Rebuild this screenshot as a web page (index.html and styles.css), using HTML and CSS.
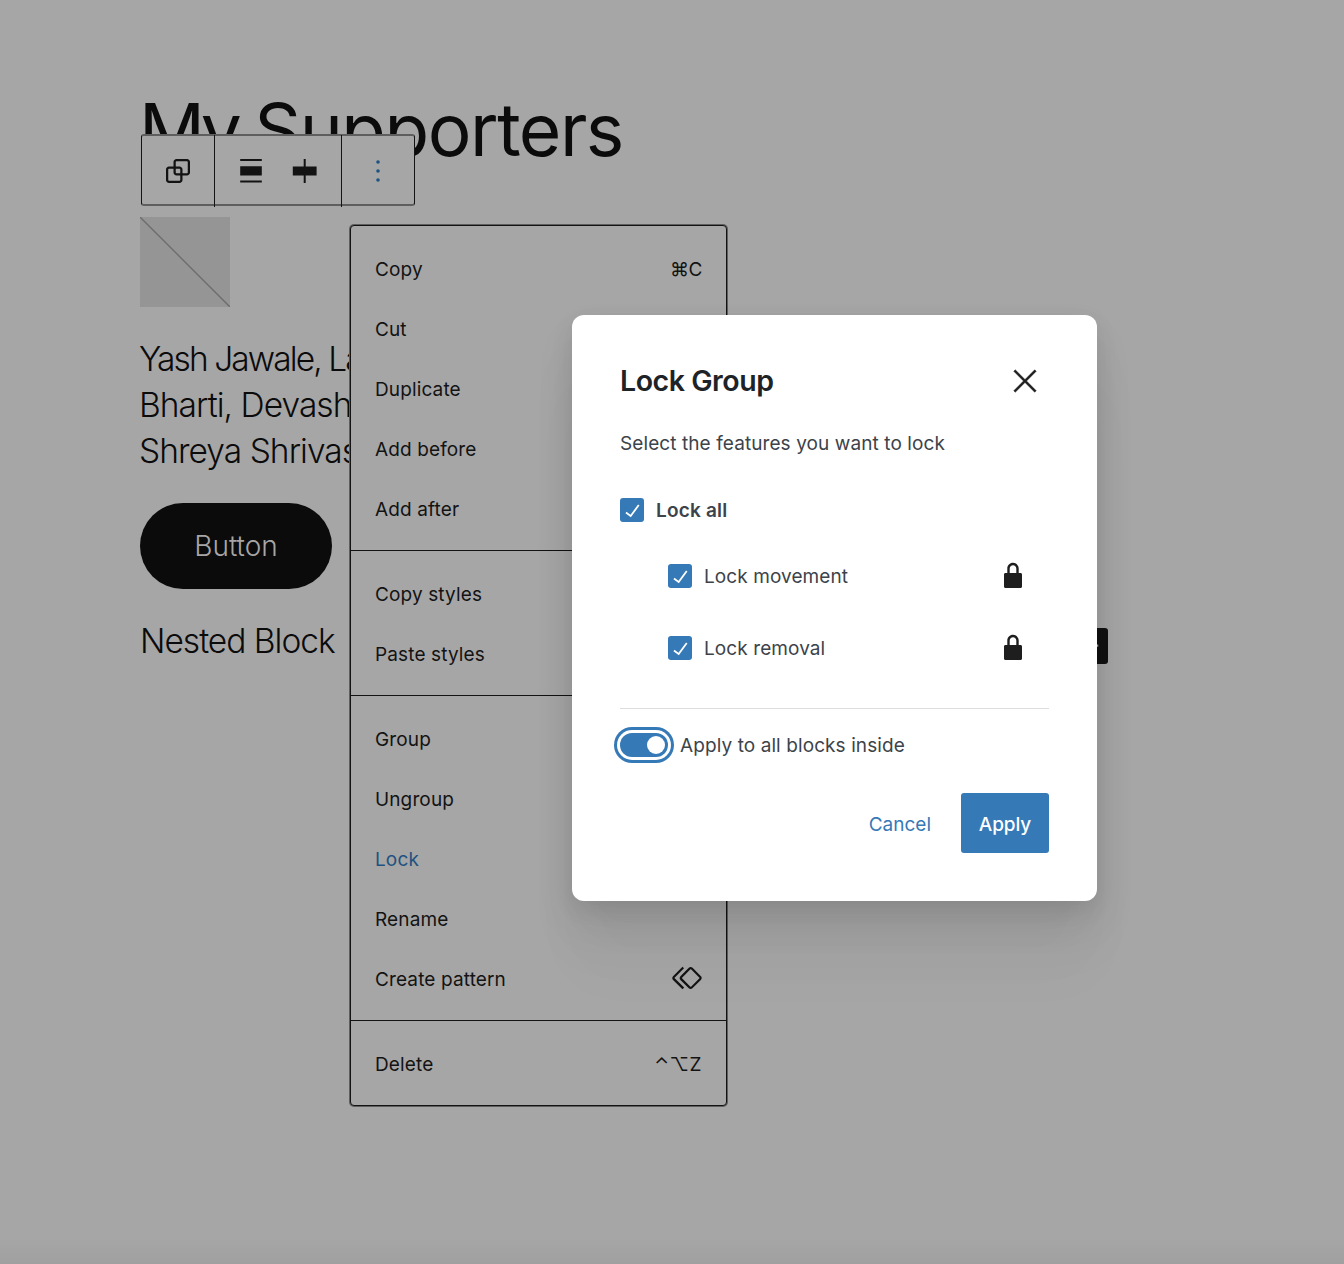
FILE: index.html
```html
<!DOCTYPE html>
<html lang="en">
<head>
<meta charset="utf-8">
<title>My Supporters</title>
<link rel="stylesheet" href="styles.css">
</head>
<body>
<main class="canvas">
  <h1 class="page-title"><span class="narrow">My</span> Supporters</h1>
  <svg class="placeholder" viewBox="0 0 90 90"><path d="M0 0L90 90"/></svg>
  <p class="names"><span class="tight">Yash Jawale, La</span><br>Bharti, Devash<br>Shreya Shrivas</p>
  <a class="cta">Button</a>
  <div class="nested">
    <p>Nested Block</p>
    <button class="appender" aria-label="Add block"><svg viewBox="0 0 24 24"><path d="M11 12.5V17.5H12.5V12.5H17.5V11H12.5V6H11V11H6V12.5H11Z"/></svg></button>
  </div>
</main>

<div class="toolbar">
  <div class="tool-group single">
    <svg viewBox="0 0 24 24"><path d="M18 4h-7c-1.1 0-2 .9-2 2v3H6c-1.1 0-2 .9-2 2v7c0 1.1.9 2 2 2h7c1.1 0 2-.9 2-2v-3h3c1.1 0 2-.9 2-2V6c0-1.1-.9-2-2-2zm-4.5 14c0 .3-.2.5-.5.5H6c-.3 0-.5-.2-.5-.5v-7c0-.3.2-.5.5-.5h3V13c0 1.1.9 2 2 2h2.5v3zm0-4.5H11c-.3 0-.5-.2-.5-.5v-2.5H13c.3 0 .5.2.5.5v2.5zm5-.5c0 .3-.2.5-.5.5h-3V11c0-1.1-.9-2-2-2h-2.5V6c0-.3.2-.5.5-.5h7c.3 0 .5.2.5.5v7z"/></svg>
  </div>
  <div class="tool-group pair">
    <svg viewBox="0 0 36 36"><path d="M7.2 6h21.6v2H7.2zM7.2 13.2h21.6v9.2H7.2zM7.2 27.6h21.6v2H7.2z"/></svg>
    <svg viewBox="0 0 36 36"><path d="M5.8 13.4h10.9V6h2v7.4h10.9v9.2H18.7v7.4h-2v-7.4H5.8z"/></svg>
  </div>
  <div class="tool-group last">
    <svg class="more" viewBox="0 0 24 24"><circle cx="12" cy="6" r="1.2"/><circle cx="12" cy="12" r="1.2"/><circle cx="12" cy="18" r="1.2"/></svg>
  </div>
</div>

<div class="menu">
  <div class="menu-group">
    <div class="item"><span>Copy</span><span class="keys">⌘C</span></div>
    <div class="item"><span>Cut</span></div>
    <div class="item"><span>Duplicate</span></div>
    <div class="item"><span>Add before</span></div>
    <div class="item"><span>Add after</span></div>
  </div>
  <div class="menu-group">
    <div class="item"><span>Copy styles</span></div>
    <div class="item"><span>Paste styles</span></div>
  </div>
  <div class="menu-group">
    <div class="item"><span>Group</span></div>
    <div class="item"><span>Ungroup</span></div>
    <div class="item active"><span>Lock</span></div>
    <div class="item"><span>Rename</span></div>
    <div class="item"><span>Create pattern</span>
      <svg viewBox="0 0 24 24"><path d="M21.3 10.8l-5.6-5.6c-.7-.7-1.8-.7-2.5 0l-5.6 5.6c-.7.7-.7 1.8 0 2.5l5.6 5.6c.3.3.8.5 1.2.5s.9-.2 1.2-.5l5.6-5.6c.8-.7.8-1.9.1-2.5zm-1 1.4l-5.6 5.6c-.1.1-.3.1-.4 0l-5.6-5.6c-.1-.1-.1-.3 0-.4l5.6-5.6s.1-.1.2-.1.1 0 .2.1l5.6 5.6c.1.1.1.3 0 .4zm-16.6-.4L10 5.5l-1-1-6.3 6.3c-.7.7-.7 1.8 0 2.5L9 19.5l1.1-1.1-6.3-6.3c-.2 0-.2-.2-.1-.3z"/></svg>
    </div>
  </div>
  <div class="menu-group">
    <div class="item"><span>Delete</span><span class="keys wide">⌃⌥Z</span></div>
  </div>
</div>

<section class="modal" role="dialog">
  <header class="modal-head">
    <h2>Lock Group</h2>
    <svg viewBox="0 0 24 24"><path d="m13.06 12 6.47-6.47-1.06-1.06L12 10.94 5.53 4.47 4.47 5.53 10.94 12l-6.47 6.47 1.06 1.06L12 13.06l6.47 6.47 1.06-1.06L13.06 12Z"/></svg>
  </header>
  <p class="desc">Select the features you want to lock</p>
  <div class="check-row all">
    <i class="box"><svg viewBox="0 0 24 24"><path d="M16.7 7.1l-6.3 8.5-3.3-2.5-.9 1.2 4.5 3.4L17.9 8z"/></svg></i>
    <span>Lock all</span>
  </div>
  <div class="check-row sub">
    <i class="box"><svg viewBox="0 0 24 24"><path d="M16.7 7.1l-6.3 8.5-3.3-2.5-.9 1.2 4.5 3.4L17.9 8z"/></svg></i>
    <span>Lock movement</span>
    <svg class="lock" viewBox="0 0 24 24"><path d="M17 10h-1.2V7c0-2.1-1.7-3.8-3.8-3.8-2.1 0-3.8 1.7-3.8 3.8v3H7c-.6 0-1 .4-1 1v8c0 .6.4 1 1 1h10c.6 0 1-.4 1-1v-8c0-.6-.4-1-1-1zm-2.8 0H9.8V7c0-1.2 1-2.2 2.2-2.2s2.2 1 2.2 2.2v3z"/></svg>
  </div>
  <div class="check-row sub">
    <i class="box"><svg viewBox="0 0 24 24"><path d="M16.7 7.1l-6.3 8.5-3.3-2.5-.9 1.2 4.5 3.4L17.9 8z"/></svg></i>
    <span>Lock removal</span>
    <svg class="lock" viewBox="0 0 24 24"><path d="M17 10h-1.2V7c0-2.1-1.7-3.8-3.8-3.8-2.1 0-3.8 1.7-3.8 3.8v3H7c-.6 0-1 .4-1 1v8c0 .6.4 1 1 1h10c.6 0 1-.4 1-1v-8c0-.6-.4-1-1-1zm-2.8 0H9.8V7c0-1.2 1-2.2 2.2-2.2s2.2 1 2.2 2.2v3z"/></svg>
  </div>
  <div class="apply-all">
    <i class="toggle"></i>
    <span>Apply to all blocks inside</span>
  </div>
  <footer class="actions">
    <button class="cancel">Cancel</button>
    <button class="apply">Apply</button>
  </footer>
</section>
</body>
</html>
```
FILE: styles.css
```css
* { box-sizing: border-box; }

body {
  position: relative;
  height: 1264px;
  margin: 0;
  overflow: hidden;
  background: linear-gradient(#a6a6a6 0 1238px, #a0a0a0 1264px);
  color: #0b0b0b;
  font-family: Inter, "Liberation Sans", sans-serif;
}

svg { display: block; fill: currentColor; flex: none; }
p, h1, h2 { margin: 0; }
button { border: 0; padding: 0; font: inherit; }

.canvas { display: flex; flex-direction: column; align-items: flex-start; width: 1108px; padding: 85px 0 0 140px; }
.page-title { height: 90px; margin-left: -1px; font-size: 73px; font-weight: 400; line-height: 90px; letter-spacing: -1.5px; word-spacing: -2px; white-space: nowrap; }
.narrow { letter-spacing: -4.5px; }
.placeholder { width: 90px; height: 90px; margin-top: 42px; background: #959595; }
.placeholder path { stroke: #6c6c6c; stroke-width: 1.3; }
.names { margin: 29px 0 0 -1px; font-size: 33.5px; font-weight: 300; line-height: 46px; letter-spacing: -.95px; white-space: nowrap; }
.tight { letter-spacing: -1.9px; }
.cta { display: flex; align-items: center; justify-content: center; width: 192px; height: 86px; margin-top: 29px; border-radius: 43px; background: #0b0b0b; color: #a6a6a6; font-size: 28px; font-weight: 300; }
.nested { display: flex; justify-content: space-between; width: 100%; margin-top: 29px; font-size: 33.5px; font-weight: 300; line-height: 46px; letter-spacing: -1px; }
.appender { width: 36px; height: 36px; margin-top: 10px; border-radius: 3px; background: #131313; color: #a6a6a6; }
.appender svg { width: 36px; height: 36px; }

.toolbar { position: absolute; left: 141px; top: 134px; display: flex; width: 274px; height: 72px; border: solid #5e5e5e; border-width: 2px 1px; border-left-color: #131313; border-right-color: #131313; border-radius: 3px; background: #a6a6a6; color: #131313; }
.tool-group { display: flex; align-items: center; justify-content: center; height: 72px; margin-top: -1px; padding-bottom: 1px; }
.tool-group + .tool-group { border-left: 1px solid #131313; }
.tool-group svg { width: 36px; height: 36px; }
.single { width: 72px; }
.pair { width: 127px; gap: 18px; }
.last { width: 73px; }
.more { color: #1f5280; }

.menu { position: absolute; left: 350px; top: 225px; width: 377px; border: 1px solid #131313; border-radius: 4px; background: #a6a6a6; color: #131313; font-size: 19px; letter-spacing: .13px; box-shadow: 0 0 0 1px #5e5e5e; }
.menu-group { padding: 13px 24px 11px; }
.menu-group + .menu-group { border-top: 1px solid #131313; }
.item { display: flex; align-items: center; justify-content: space-between; height: 60px; }
.item svg { width: 36px; height: 36px; margin: -2px -3px 0 0; }
.keys { letter-spacing: -.5px; }
.wide { letter-spacing: .5px; }
.active { color: #1f5280; }

.modal { position: absolute; left: 572px; top: 315px; width: 525px; height: 586px; padding: 42px 48px 48px; border-radius: 12px; background: #fff; color: #3c434a; font-size: 19px; letter-spacing: .09px; box-shadow: 0 7px 22px rgba(0,0,0,.08), 0 22px 40px rgba(0,0,0,.07), 0 45px 54px rgba(0,0,0,.04), 0 75px 64px rgba(0,0,0,.02); }
.modal-head { display: flex; align-items: center; justify-content: space-between; height: 48px; padding-right: 6px; color: #1d2327; }
.modal-head h2 { padding-bottom: 2px; font-size: 28.5px; font-weight: 600; letter-spacing: -.45px; }
.modal-head svg { width: 36px; height: 36px; color: #1e1e1e; stroke: currentColor; stroke-width: .25; }
.desc { margin-top: 27px; line-height: 24px; }
.check-row { display: flex; align-items: center; gap: 12px; height: 72px; }
.all { height: 24px; margin-top: 42px; margin-bottom: 18px; font-weight: 600; letter-spacing: .2px; }
.sub { padding: 0 18px 0 48px; }
.box { display: flex; align-items: center; justify-content: center; width: 24px; height: 24px; border-radius: 3px; background: #3579b7; color: #fff; }
.box svg { width: 28.8px; height: 28.8px; }
.lock { width: 36px; height: 36px; margin-left: auto; color: #1e1e1e; }
.apply-all { display: flex; align-items: center; gap: 12px; height: 73px; margin-top: 24px; border-top: 1px solid #ddd; }
.toggle { display: flex; justify-content: flex-end; width: 48px; height: 24px; padding: 3px; border-radius: 12px; background: #3579b7; box-shadow: 0 0 0 3px #fff, 0 0 0 6px #3579b7; }
.toggle::after { content: ""; width: 18px; height: 18px; border-radius: 50%; background: #fff; }
.actions { display: flex; justify-content: flex-end; height: 60px; margin-top: 12px; }
.cancel { padding: 2px 30px 0; background: none; color: #3579b7; letter-spacing: 0; }
.apply { width: 88px; padding-top: 2px; border-radius: 3px; background: #3579b7; color: #fff; font-weight: 500; letter-spacing: -.1px; }
```
